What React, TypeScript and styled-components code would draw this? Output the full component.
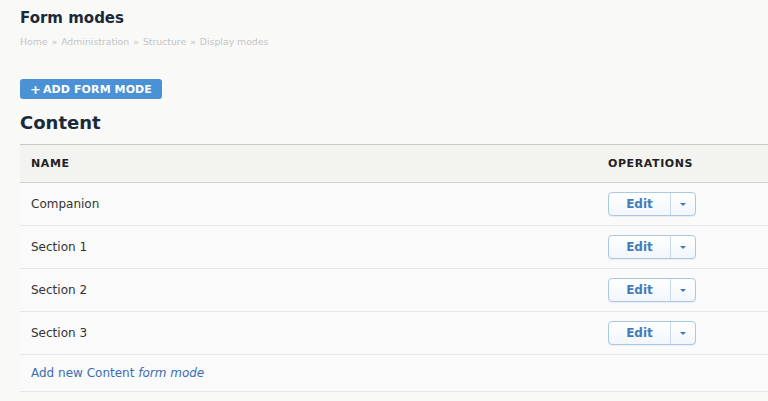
import React from 'react';
import styled, { createGlobalStyle } from 'styled-components';

const GlobalStyle = createGlobalStyle`
  html, body {
    margin: 0;
    padding: 0;
    background: #f9f9f8;
    font-family: "DejaVu Sans", "Liberation Sans", sans-serif;
    color: #333333;
  }
`;

const rows = ['Companion', 'Section 1', 'Section 2', 'Section 3'];

const App = () => {
  return (
    <>
      <GlobalStyle />
      <Page>
        <PageTitle>Form modes</PageTitle>
        <Breadcrumb>
          <Crumb>Home</Crumb>
          <Sep>»</Sep>
          <Crumb>Administration</Crumb>
          <Sep>»</Sep>
          <Crumb>Structure</Crumb>
          <Sep>»</Sep>
          <Crumb>Display modes</Crumb>
        </Breadcrumb>
        <ActionButton type='button'>
          <Plus>+</Plus>ADD FORM MODE
        </ActionButton>
        <SectionTitle>Content</SectionTitle>
        <Table>
          <thead>
            <tr>
              <HeadCell>Name</HeadCell>
              <HeadCell $width='149px'>Operations</HeadCell>
            </tr>
          </thead>
          <tbody>
            {rows.map((name) => (
              <Row key={name}>
                <Cell>{name}</Cell>
                <Cell>
                  <DropButton>
                    <EditPart>Edit</EditPart>
                    <TogglePart>
                      <Arrow />
                    </TogglePart>
                  </DropButton>
                </Cell>
              </Row>
            ))}
            <Row>
              <Cell colSpan={2} $height='36px'>
                <AddLink href='#'>
                  Add new Content <em>form mode</em>
                </AddLink>
              </Cell>
            </Row>
          </tbody>
        </Table>
      </Page>
    </>
  );
};

const Page = styled.div`
  padding: 8px 0 0 20px;
  overflow: hidden;
`;

const PageTitle = styled.h1`
  margin: 0;
  font-size: 15px;
  font-weight: bold;
  color: #1b2a3a;
  line-height: 20px;
`;

const Breadcrumb = styled.nav`
  display: flex;
  gap: 4px;
  margin-top: 8px;
  font-size: 9.3px;
  line-height: 12px;
  color: #c4c4c4;
`;

const Crumb = styled.span``;

const Sep = styled.span``;

const ActionButton = styled.button`
  display: flex;
  align-items: center;
  margin-top: 31px;
  height: 20px;
  padding: 0 10px 0 10px;
  border: none;
  border-radius: 3px;
  background: #4a91d6;
  color: #ffffff;
  font-family: inherit;
  font-size: 11px;
  font-weight: bold;
  letter-spacing: 0.1px;
  cursor: pointer;
`;

const Plus = styled.span`
  font-size: 13px;
  margin-right: 2px;
`;

const SectionTitle = styled.h2`
  margin: 13px 0 0;
  font-size: 18px;
  line-height: 22px;
  font-weight: bold;
  color: #1b2a3a;
`;

const Table = styled.table`
  margin-top: 10px;
  width: 100%;
  border-collapse: collapse;
`;

const HeadCell = styled.th<{ $width?: string }>`
  width: ${(p) => p.$width || 'auto'};
  height: 37px;
  padding: 0 11px;
  text-align: left;
  text-transform: uppercase;
  font-size: 11px;
  font-weight: bold;
  letter-spacing: 0.6px;
  color: #222222;
  background: #f3f3f0;
  border-top: 1px solid #c9c9c4;
  border-bottom: 1px solid #d4d4cf;
`;

const Row = styled.tr`
  border-bottom: 1px solid #e8e8e4;
  background: #fafafa;
`;

const Cell = styled.td<{ $height?: string }>`
  height: ${(p) => p.$height || '42px'};
  padding: 0 11px;
  font-size: 12px;
  color: #333333;
`;

const DropButton = styled.div`
  display: inline-flex;
  height: 22px;
  border: 1px solid #a9c7e6;
  border-radius: 4px;
  background: linear-gradient(#ffffff, #f1f6fb);
  box-shadow: 0 1px 1px rgba(0, 0, 0, 0.06);
`;

const EditPart = styled.span`
  display: flex;
  align-items: center;
  justify-content: center;
  width: 61px;
  font-size: 12px;
  font-weight: bold;
  color: #3f7dbd;
`;

const TogglePart = styled.span`
  display: flex;
  align-items: center;
  justify-content: center;
  width: 24px;
  border-left: 1px solid #c9d9ea;
`;

const Arrow = styled.span`
  width: 0;
  height: 0;
  border-left: 3px solid transparent;
  border-right: 3px solid transparent;
  border-top: 3px solid #3a7bbf;
`;

const AddLink = styled.a`
  color: #3b6db3;
  text-decoration: none;
  font-size: 12px;
`;

export default App;
